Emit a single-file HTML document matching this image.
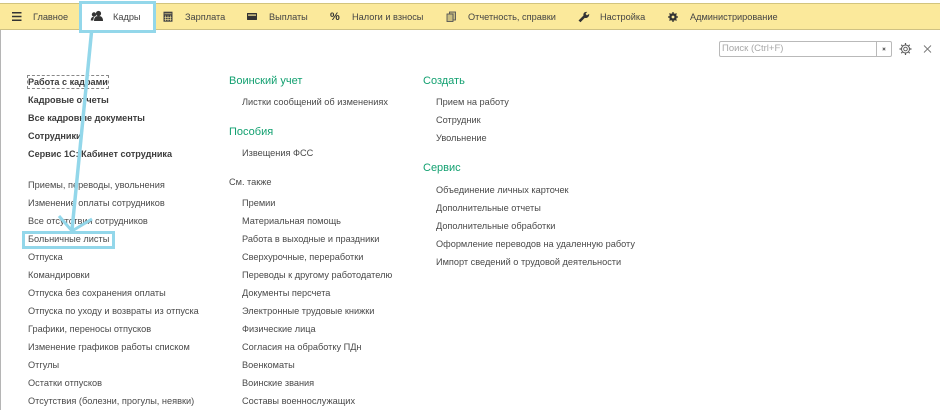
<!DOCTYPE html>
<html><head><meta charset="utf-8"><style>
html,body{margin:0;padding:0;background:#fff}
#p{position:relative;width:940px;height:410px;overflow:hidden;background:#fff;font-family:"Liberation Sans",sans-serif;color:#4a4a4a;font-size:9.2px;filter:blur(.3px)}
#p div.t{position:absolute;white-space:nowrap;line-height:12px;height:12px}
#p div.n{margin-top:1px}
#p div.u{margin-top:-1px}
.b{font-weight:bold;color:#3c3c3c;font-size:9.1px}
.g{font-size:11px;color:#12a070}
.n{font-size:9.2px;color:#444}
.abs{position:absolute}
svg{position:absolute;left:0;top:0}
</style></head><body><div id="p">
<div class="abs" style="left:0;top:3px;width:940px;height:27px;background:#fbe99b;border-top:1px solid #d2c47e;border-bottom:1px solid #cfc183;box-sizing:border-box"></div>
<div class="abs" style="left:0;top:30px;width:1px;height:380px;background:#b5b5b5"></div>
<div class="abs" style="left:81px;top:4px;width:72px;height:26px;background:#fff"></div>
<div class="t n" style="left:33px;top:10px">Главное</div>
<div class="t n" style="left:113px;top:10px">Кадры</div>
<div class="t n" style="left:185px;top:10px">Зарплата</div>
<div class="t n" style="left:269px;top:10px">Выплаты</div>
<div class="t n" style="left:352px;top:10px">Налоги и взносы</div>
<div class="t n" style="left:468px;top:10px">Отчетность, справки</div>
<div class="t n" style="left:600px;top:10px">Настройка</div>
<div class="t n" style="left:690px;top:10px">Администрирование</div>
<div class="t" style="left:330px;top:10px;font-size:11px;font-weight:bold;color:#333;height:14px;line-height:14px">%</div>

<div class="abs" style="left:719px;top:41px;width:173px;height:16px;box-sizing:border-box;border:1px solid #b9b9b9;border-radius:2px;background:#fff"></div>
<div class="abs" style="left:876px;top:41px;width:1px;height:16px;background:#b9b9b9"></div>
<div class="t" style="left:722px;top:43px;color:#a8a8a8;font-size:9.5px">Поиск (Ctrl+F)</div>

<div class="abs" style="left:27px;top:75px;width:82px;height:14px;box-sizing:border-box;border:1px dashed #888"></div>
<div class="t b" style="left:28px;top:76px">Работа с кадрами</div>
<div class="t b" style="left:28px;top:94px">Кадровые отчеты</div>
<div class="t b" style="left:28px;top:112px">Все кадровые документы</div>
<div class="t b" style="left:28px;top:130px">Сотрудники</div>
<div class="t b" style="left:28px;top:148px">Сервис 1С: Кабинет сотрудника</div>
<div class="t u" style="left:28px;top:180px">Приемы, переводы, увольнения</div>
<div class="t u" style="left:28px;top:198px">Изменение оплаты сотрудников</div>
<div class="t u" style="left:28px;top:216px">Все отсутствия сотрудников</div>
<div class="t u" style="left:28px;top:234px">Больничные листы</div>
<div class="t u" style="left:28px;top:252px">Отпуска</div>
<div class="t u" style="left:28px;top:270px">Командировки</div>
<div class="t u" style="left:28px;top:288px">Отпуска без сохранения оплаты</div>
<div class="t u" style="left:28px;top:306px">Отпуска по уходу и возвраты из отпуска</div>
<div class="t u" style="left:28px;top:324px">Графики, переносы отпусков</div>
<div class="t u" style="left:28px;top:342px">Изменение графиков работы списком</div>
<div class="t u" style="left:28px;top:360px">Отгулы</div>
<div class="t u" style="left:28px;top:378px">Остатки отпусков</div>
<div class="t u" style="left:28px;top:396px">Отсутствия (болезни, прогулы, неявки)</div>

<div class="t g" style="left:229px;top:75px">Воинский учет</div>
<div class="t" style="left:242px;top:96px">Листки сообщений об изменениях</div>
<div class="t g" style="left:229px;top:126px">Пособия</div>
<div class="t u" style="left:242px;top:148px">Извещения ФСС</div>
<div class="t" style="left:229px;top:176px;font-size:9.2px">См. также</div>
<div class="t u" style="left:242px;top:198px">Премии</div>
<div class="t u" style="left:242px;top:216px">Материальная помощь</div>
<div class="t u" style="left:242px;top:234px">Работа в выходные и праздники</div>
<div class="t u" style="left:242px;top:252px">Сверхурочные, переработки</div>
<div class="t u" style="left:242px;top:270px">Переводы к другому работодателю</div>
<div class="t u" style="left:242px;top:288px">Документы персчета</div>
<div class="t u" style="left:242px;top:306px">Электронные трудовые книжки</div>
<div class="t u" style="left:242px;top:324px">Физические лица</div>
<div class="t u" style="left:242px;top:342px">Согласия на обработку ПДн</div>
<div class="t u" style="left:242px;top:360px">Военкоматы</div>
<div class="t u" style="left:242px;top:378px">Воинские звания</div>
<div class="t u" style="left:242px;top:396px">Составы военнослужащих</div>

<div class="t g" style="left:423px;top:75px">Создать</div>
<div class="t" style="left:436px;top:96px">Прием на работу</div>
<div class="t" style="left:436px;top:114px">Сотрудник</div>
<div class="t" style="left:436px;top:132px">Увольнение</div>
<div class="t g" style="left:423px;top:162px">Сервис</div>
<div class="t" style="left:436px;top:184px">Объединение личных карточек</div>
<div class="t" style="left:436px;top:202px">Дополнительные отчеты</div>
<div class="t" style="left:436px;top:220px">Дополнительные обработки</div>
<div class="t" style="left:436px;top:238px">Оформление переводов на удаленную работу</div>
<div class="t" style="left:436px;top:256px">Импорт сведений о трудовой деятельности</div>

<svg width="940" height="410" viewBox="0 0 940 410">
<!-- menu -->
<path d="M12 12.700h9.500M12 16.500h9.500M12 20.300h9.500" stroke="#333" stroke-width="1.500" fill="none"/>
<!-- people -->
<circle cx="98.500" cy="13.500" r="2.600" fill="#333"/><path d="M94 21c0-3.500 1.500-5 4.500-5s4.500 1.500 4.500 5z" fill="#333"/>
<circle cx="94" cy="14.500" r="2.200" fill="#333"/><path d="M90.800 20.500c0-2.500 1-3.800 3.200-3.800l-.8 3.800z" fill="#333"/>
<!-- calc -->
<rect x="163.500" y="11.700" width="9" height="10" fill="#444"/><path d="M164.500 13.800h7M165.500 15.500v5.500M168 15.500v5.500M170.500 15.500v5.500M164.500 17.300h7M164.500 19.300h7" stroke="#fbe99b" stroke-width=".6" fill="none"/>
<!-- wallet -->
<rect x="247" y="13" width="10" height="7" rx=".5" fill="#333"/><rect x="248" y="14.500" width="8" height="1.200" fill="#fbe99b"/>
<!-- docs -->
<rect x="449.500" y="12" width="6" height="8" fill="#c9bd80" stroke="#555" stroke-width=".9"/><rect x="447" y="14" width="6" height="7.500" fill="#c9bd80" stroke="#555" stroke-width=".9"/>
<!-- wrench -->
<path d="M578.500 20.500l5-5c-.5-2.300 1-4 3.700-3.600l-1.700 2 1.400 1.500 2.300-1.500c.3 3-2.300 4.700-4.500 4l-4.200 4.300z" fill="#333"/>
<!-- gear dark -->
<circle cx="673" cy="17" r="2.800" fill="none" stroke="#333" stroke-width="2"/><path d="M673 12v10M668 17h10M669.500 13.500l7 7M676.500 13.500l-7 7" stroke="#333" stroke-width="1.300"/>
<circle cx="673" cy="17" r="1.400" fill="#fbe99b"/>
<!-- clear x -->
<path d="M882.700 47.700l2.600 2.600M885.300 47.700l-2.600 2.600" stroke="#555" stroke-width=".9"/>
<!-- settings gear -->
<circle cx="905.500" cy="49" r="4" fill="none" stroke="#555" stroke-width="1"/><circle cx="905.500" cy="49" r="1.800" fill="none" stroke="#555" stroke-width=".9"/>
<path d="M905.500 43v1.500M905.500 53.500V55M899.500 49H901M910 49h1.500M901.300 44.800l1 1M908.700 52.200l1 1M909.700 44.800l-1 1M902.300 52.200l-1 1" stroke="#555" stroke-width="1.200"/>
<!-- close -->
<path d="M924 45.500l7 7M931 45.500l-7 7" stroke="#777" stroke-width=".9"/>
<!-- highlights -->
<rect x="80.500" y="2.500" width="74" height="29" fill="none" stroke="#93d7ea" stroke-width="3"/>
<rect x="23.500" y="232.500" width="90" height="15" fill="none" stroke="#93d7ea" stroke-width="3"/>
<path d="M91.500 32L72 230" stroke="#93d7ea" stroke-width="3.500" fill="none"/>
<path d="M59 216L72 231L92 219" stroke="#93d7ea" stroke-width="3" fill="none"/>
</svg>
</div></body></html>
